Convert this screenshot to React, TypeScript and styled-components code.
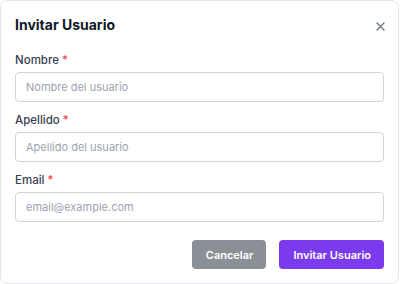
import React from "react";
import styled, { createGlobalStyle } from "styled-components";

const Global = createGlobalStyle`
  html, body { margin: 0; padding: 0; background: #ffffff; }
  body { font-family: Inter, "Noto Sans", sans-serif; }
  * { box-sizing: border-box; }
`;

const Dialog = styled.div`
  width: 399px;
  height: 284px;
  border: 1px solid #e5e7eb;
  border-radius: 7px;
  background: #fff;
  padding: 12px 14px 16px 14px;
  display: flex;
  flex-direction: column;
`;

const Header = styled.div`
  display: flex;
  align-items: center;
  justify-content: space-between;
  height: 24px;
`;

const Title = styled.h2`
  margin: 0;
  font-size: 14px;
  line-height: 24px;
  font-weight: 700;
  color: #111827;
`;

const CloseButton = styled.button`
  border: none;
  background: transparent;
  padding: 0;
  width: 16px;
  height: 16px;
  display: flex;
  align-items: center;
  justify-content: center;
  color: #6b7280;
  cursor: pointer;
  margin-right: -4px;
  margin-top: 2px;
`;

const Form = styled.form`
  display: flex;
  flex-direction: column;
  margin-top: 15px;
`;

const Field = styled.div`
  display: flex;
  flex-direction: column;
  gap: 4px;
  margin-bottom: 10px;
`;

const Label = styled.label`
  font-size: 11.5px;
  line-height: 16px;
  font-weight: 500;
  color: #374151;
`;

const Required = styled.span`
  color: #ef4444;
  margin-left: 3px;
`;

const Input = styled.input`
  height: 30px;
  width: 100%;
  border: 1px solid #d1d5db;
  border-radius: 4px;
  padding: 0 10px;
  font-family: Inter, "Noto Sans", sans-serif;
  font-size: 11px;
  color: #111827;
  outline: none;
  &::placeholder { color: #9ca3af; }
`;

const Actions = styled.div`
  display: flex;
  justify-content: flex-end;
  gap: 13px;
  margin-top: 8px;
`;

const Button = styled.button<{ $variant: "secondary" | "primary" }>`
  height: 29px;
  padding: 0 13px 0 14px;
  border: none;
  border-radius: 4px;
  font-family: Inter, "Noto Sans", sans-serif;
  font-size: 11px;
  font-weight: 600;
  color: #fff;
  background: ${(p) => (p.$variant === "primary" ? "#7c3aed" : "#8b9097")};
  cursor: pointer;
`;

export default function App() {
  return (
    <>
      <Global />
      <Dialog>
        <Header>
          <Title>Invitar Usuario</Title>
          <CloseButton aria-label="Cerrar">
            <svg width="9" height="9" viewBox="0 0 9 9">
              <path d="M1 1L8 8M8 1L1 8" stroke="currentColor" strokeWidth="1.3" strokeLinecap="round" />
            </svg>
          </CloseButton>
        </Header>
        <Form onSubmit={(e) => e.preventDefault()}>
          <Field>
            <Label>
              Nombre<Required>*</Required>
            </Label>
            <Input placeholder="Nombre del usuario" />
          </Field>
          <Field>
            <Label>
              Apellido<Required>*</Required>
            </Label>
            <Input placeholder="Apellido del usuario" />
          </Field>
          <Field>
            <Label>
              Email<Required>*</Required>
            </Label>
            <Input placeholder="email@example.com" />
          </Field>
          <Actions>
            <Button type="button" $variant="secondary">Cancelar</Button>
            <Button type="submit" $variant="primary">Invitar Usuario</Button>
          </Actions>
        </Form>
      </Dialog>
    </>
  );
}
